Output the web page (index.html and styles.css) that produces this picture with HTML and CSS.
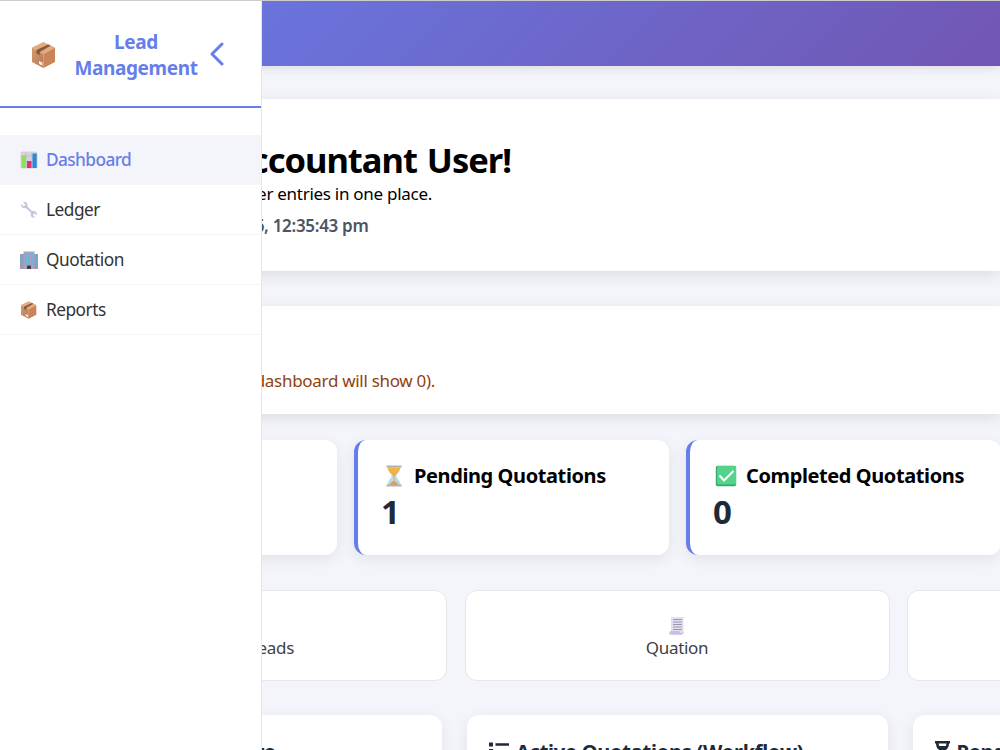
FILE: index.html
```html
<!DOCTYPE html>
<html lang="en">
<head>
<meta charset="utf-8">
<title>Lead Management</title>
<link rel="stylesheet" href="styles.css">
</head>
<body>
<svg class="defs" aria-hidden="true">
  <defs>
    <linearGradient id="boxSide" x2="1" y2="1"><stop stop-color="#d19a6f"/><stop offset="1" stop-color="#b97850"/></linearGradient>
    <linearGradient id="sand" x2="0" y2="1"><stop stop-color="#f7b64a"/><stop offset="1" stop-color="#ee9835"/></linearGradient>
    <symbol id="box" viewBox="0 0 24 26">
      <path fill="#e0ab7e" d="M11.500 0 23 5.500 11.500 12 0 5.500Z"/>
      <path fill="#c98558" d="M11.500 12 23 5.500V20l-11.500 6Z"/>
      <path fill="url(#boxSide)" d="M0 5.500 11.500 12v14L0 20Z"/>
      <path fill="#87563f" d="m4.500 8 11.700-5.500 2.300 1.200L7.700 9.900v3.300l-3.200-2Z"/>
      <path fill="#f4e9ed" d="m7 19 3.500 1.500v3.300L7 22Z"/>
    </symbol>
  </defs>
</svg>
<div class="page">
  <header class="topbar"></header>
  <main class="content">
    <section class="panel welcome">
      <h1 class="welcome-title">ccountant User!</h1>
      <p class="welcome-text">er entries in one place.</p>
      <p class="welcome-time">6, 12:35:43 pm</p>
    </section>
    <section class="panel notice"><p class="notice-text">dashboard will show 0).</p></section>
    <section class="stats">
      <article class="stat"></article>
      <article class="stat">
        <h2 class="stat-title">
          <svg class="stat-icon" viewBox="0 0 22 22"><path fill="#b5dcf5" d="M4.500 2h13c0 5-4 6-4 9s4 4 4 9h-13c0-5 4-6 4-9s-4-4-4-9Z"/><path fill="url(#sand)" d="M5 3h12c0 4-3.500 5-5.200 8h-1.600C8.500 8 5 7 5 3ZM10.500 11h1v5c2 1 3.500 2 4 4h-9c.5-2 2-3 4-4Z"/><path fill="#a9b3bb" d="M3.500.5h15v2h-15Zm0 19h15v2h-15Z"/></svg>
          <span>Pending Quotations</span>
        </h2>
        <div class="stat-value">1</div>
      </article>
      <article class="stat">
        <h2 class="stat-title">
          <svg class="stat-icon" viewBox="0 0 22 22"><rect x=".8" y=".8" width="20.400" height="20.400" rx="1.800" fill="#36a86f"/><rect x="2" y="1" width="19" height="18.500" rx="1" fill="#55d28c"/><path fill="none" stroke="#fff" stroke-width="2" d="m4.500 10.500 4.500 5L18.500 6"/></svg>
          <span>Completed Quotations</span>
        </h2>
        <div class="stat-value">0</div>
      </article>
    </section>
    <section class="links">
      <div class="link-card"><span class="link-label leads">Leads</span></div>
      <div class="link-card">
        <svg class="link-icon" viewBox="0 0 16 18"><path fill="#e4def0" d="M2 0h12.500v16H2Z"/><path stroke="#9d96ae" stroke-width="1" d="M4 2.500h9M4 5h9M4 7.500h9M4 10h9M4 12.500h9"/><path fill="#cdbbe9" d="M1.500 14H11c-1 1 0 2 1 2s2.500-1 2.500-2v2c0 1-1.500 1.700-2.500 1.700H2c-2 0-2.500-2.500-.5-3.700Z"/></svg>
        <span class="link-label">Quation</span>
      </div>
      <div class="link-card"></div>
    </section>
    <section class="tables">
      <article class="table-card"><h2 class="table-title first-title">re</h2></article>
      <article class="table-card"><h2 class="table-title">
        <svg class="list-icon" viewBox="0 0 20 18"><path fill="#1f2937" d="M0 .5h4v4H0ZM6.500 1.300h13.500v2.400H6.500ZM0 7h4v4H0Zm6.500 1H20v2.400H6.500ZM0 13.500h4v4H0Zm6.500 1H20v2.400H6.500Z"/></svg>
        <span>Active Quotations (Workflow)</span></h2></article>
      <article class="table-card"><h2 class="table-title">
        <svg class="glass-icon" viewBox="0 0 15 20"><path fill="#1f2937" fill-rule="evenodd" d="M0 0h15v2.500h-1c0 4-2 5.500-4 7.500 2 2 4 3.500 4 7.500h1V20H0v-2.500h1c0-4 2-5.500 4-7.500C3 8 1 6.500 1 2.500H0Zm3.500 2.500.7 2.500h6.600l.7-2.500Z"/></svg>
        <span>Pending</span></h2></article>
    </section>
  </main>
</div>
<aside class="sidebar">
  <div class="brand">
    <svg class="brand-icon"><use href="#box"/></svg>
    <div class="brand-name"><span>Lead</span><span>Management</span></div>
    <svg class="chevron" viewBox="0 0 14 24"><path fill="none" stroke="#667eea" stroke-width="3" stroke-linecap="round" stroke-linejoin="round" d="M12 2 2 12l10 10"/></svg>
  </div>
  <nav class="nav">
    <a class="nav-item active"><svg class="nav-icon" viewBox="0 0 18 18"><rect x=".5" y=".5" width="17" height="17" rx="2" fill="#d8d2df"/><path stroke="#bbb5c5" stroke-width=".7" d="M6 1v16M12 1v16M1 5h16M1 11h16"/><path fill="#8de05b" d="M1.500 4.500H6V17H1.500Z"/><path fill="#e52f6d" d="M7 10h4.500v7H7Z"/><path fill="#2788dc" d="M12.500 2.500h4.200V17h-4.200Z"/></svg><span>Dashboard</span></a>
    <a class="nav-item"><svg class="nav-icon" viewBox="0 0 18 18"><path fill="#cbc3dc" d="m3 1 2.500 2.500L4 5.500 1.200 3C.5 6 3 8 6 7l5 5c-1 3 1 5.500 4 4.500L12.800 14l1.500-1.800 2.500 2C17.500 11 15 9.500 12 10L7.500 5.500C8 2.500 6 .3 3 1Z"/></svg><span>Ledger</span></a>
    <a class="nav-item"><svg class="nav-icon" viewBox="0 0 18 18"><path fill="#9f96b0" d="M0 3h4v15H0Zm14 0h4v15h-4Z"/><path fill="#aaa2b8" d="M3.500.5h11V18h-11Z"/><path stroke="#4ebcf2" stroke-width="1.800" stroke-dasharray="2 .9" d="M6 2v12M9 2v12M12 2v12M1.500 5.500V15M16.500 5.500V15"/><path fill="#49364d" d="M7 14.500h4V18H7Z"/></svg><span>Quotation</span></a>
    <a class="nav-item"><svg class="nav-icon" viewBox="0 0 18 18"><use href="#box" x="1" y="0" width="16" height="18"/></svg><span>Reports</span></a>
  </nav>
</aside>
</body>
</html>
```

FILE: styles.css
```css
* { box-sizing: border-box; }
body { margin: 0; width: 1000px; height: 750px; overflow: hidden; background: #f4f5fa; font-family: "Noto Sans", "Open Sans", sans-serif; color: #000; }
h1, h2, p { margin: 0; font-size: inherit; white-space: nowrap; }
svg { display: block; flex: none; }
.defs { position: absolute; width: 0; height: 0; }
.page { height: 750px; overflow: hidden; border-top: 1px solid #ccc; }
.topbar { height: 65.4px; background: linear-gradient(135deg, #667eea, #7256b3); box-shadow: 0 2px 10px rgba(0,0,0,.1); }
.content { padding-top: 33px; }
.panel { background: #fff; box-shadow: 0 4px 15px rgba(0,0,0,.1); }
.welcome { height: 172px; padding-top: 37.6px; }
.welcome-title { width: 511px; text-align: right; font-size: 34.5px; line-height: 46px; letter-spacing: -1px; word-spacing: 2px; }
.welcome-text { width: 432px; text-align: right; font-size: 17px; line-height: 22px; letter-spacing: -.28px; }
.welcome-time { width: 368.5px; margin-top: 10px; text-align: right; font-size: 17px; font-weight: 600; line-height: 22px; color: #4b5563; letter-spacing: -.3px; }
.notice { height: 108px; margin-top: 34.6px; padding-top: 63px; }
.notice-text { width: 435px; text-align: right; font-size: 17px; line-height: 23px; color: #92400e; letter-spacing: -.3px; }
.stats { display: grid; grid-template-columns: repeat(3, 315px); gap: 17px; padding-left: 22px; margin-top: 26px; }
.stat { height: 115px; padding: 23px 0 0 23px; border-left: 4px solid #667eea; border-radius: 12px; background: #fff; box-shadow: 0 4px 15px rgba(0,0,0,.08); }
.stat-title { display: flex; align-items: center; height: 26px; font-size: 20px; letter-spacing: -.4px; }
.stat-icon { width: 22px; height: 22px; margin: 0 9px 0 2px; }
.stat-value { height: 46px; font-size: 33px; font-weight: 700; line-height: 46px; color: #1f2937; }
.links { display: grid; grid-template-columns: repeat(3, 425px); gap: 17.5px; padding-left: 22px; margin-top: 35px; }
.link-card { display: flex; flex-direction: column; align-items: center; height: 91.4px; padding-top: 26px; border: 1px solid #e5e7eb; border-radius: 12px; background: #fff; }
.link-icon { width: 16px; height: 18px; }
.link-label { font-size: 17px; line-height: 24px; margin-top: 1px; color: #3c3f44; letter-spacing: -.3px; }
.leads { align-self: flex-start; width: 271px; margin-top: 19px; text-align: right; }
.tables { display: grid; grid-template-columns: repeat(3, 421.5px); gap: 25px; padding-left: 20px; margin-top: 34px; }
.table-card { height: 180px; padding: 22px 22.5px; border-radius: 12px; background: #fff; box-shadow: 0 4px 15px rgba(0,0,0,.08); }
.table-title { display: flex; height: 30px; font-size: 20px; line-height: 30px; color: #1f2937; letter-spacing: -.24px; }
.first-title { width: 233px; justify-content: flex-end; }
.list-icon { width: 20px; height: 18px; margin: 5px 7px 0 0; }
.glass-icon { width: 15px; height: 20px; margin: 4px 7px 0 -1px; }
.sidebar { position: absolute; top: 1px; left: 0; width: 262px; height: 749px; border-right: 1px solid #e5e7eb; background: #fff; }
.brand { display: flex; align-items: center; height: 107px; padding-left: 31.5px; border-bottom: 2px solid #667eea; }
.brand-icon { width: 24px; height: 26px; margin-top: 3px; }
.brand-name { display: flex; flex-direction: column; align-items: center; width: 123px; margin: 2px 0 0 19px; font-size: 19px; font-weight: 700; line-height: 26px; color: #667eea; letter-spacing: -.38px; }
.chevron { width: 14px; height: 24px; margin-left: 12px; }
.nav { padding-top: 27px; }
.nav-item { display: flex; align-items: center; gap: 8px; height: 50px; padding-left: 20px; border-bottom: 1px solid #f4f5f7; color: #333; font-size: 17.300px; letter-spacing: -.5px; }
.active { background: #f4f5fa; color: #667eea; font-weight: 500; letter-spacing: -.6px; }
.nav-icon { width: 18px; height: 18px; }
```
